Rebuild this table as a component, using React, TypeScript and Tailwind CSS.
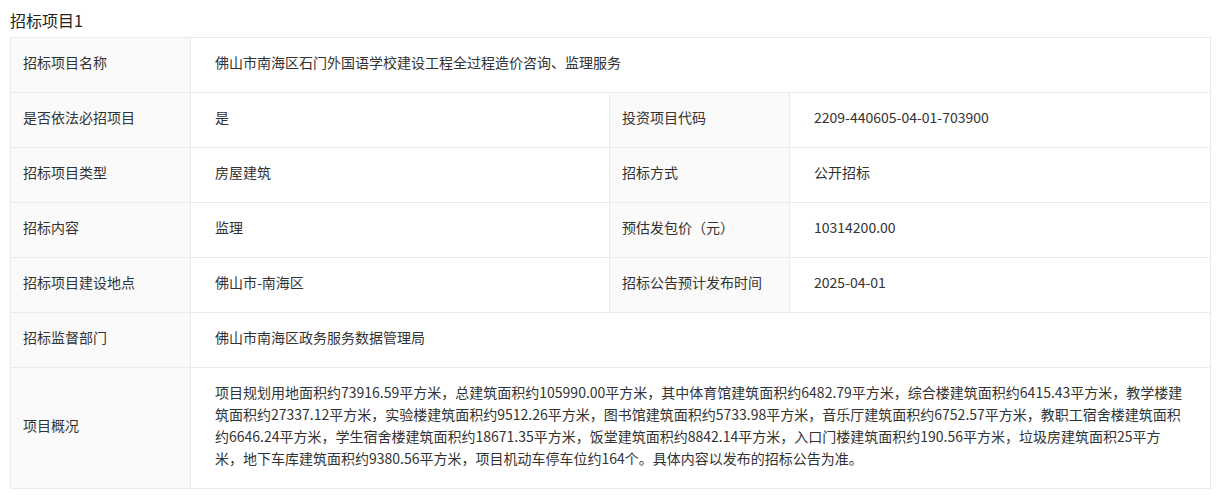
import React from 'react';

const font = { fontFamily: '"Noto Sans CJK SC", "Noto Sans", sans-serif' };

function Label({ children }: { children: React.ReactNode }) {
  return (
    <td className="border border-[#ebebeb] bg-[#fafafa] px-3 pt-[13px] pb-[19px] align-middle text-[14px] leading-[22px] text-[#333]">
      {children}
    </td>
  );
}

function Value({ children, colSpan }: { children: React.ReactNode; colSpan?: number }) {
  return (
    <td colSpan={colSpan} className="border border-[#ebebeb] bg-white pt-[13px] pb-[19px] pl-6 pr-2 align-middle text-[14px] leading-[22px] text-[#333]">
      {children}
    </td>
  );
}

const overview = [
  '项目规划用地面积约73916.59平方米，总建筑面积约105990.00平方米，其中体育馆建筑面积约6482.79平方米，综合楼建筑面积约6415.43平方米，教学楼建',
  '筑面积约27337.12平方米，实验楼建筑面积约9512.26平方米，图书馆建筑面积约5733.98平方米，音乐厅建筑面积约6752.57平方米，教职工宿舍楼建筑面积',
  '约6646.24平方米，学生宿舍楼建筑面积约18671.35平方米，饭堂建筑面积约8842.14平方米，入口门楼建筑面积约190.56平方米，垃圾房建筑面积25平方',
  '米，地下车库建筑面积约9380.56平方米，项目机动车停车位约164个。具体内容以发布的招标公告为准。',
];

export default function App() {
  return (
    <div className="min-h-[496px] bg-white px-[10px] pt-[9px]" style={font}>
      <h3 className="mb-[6px] text-[16px] font-normal leading-[22px] text-[#222]">招标项目1</h3>
      <table className="w-[1200px] table-fixed border-collapse">
        <colgroup>
          <col className="w-[180px]" />
          <col className="w-[419px]" />
          <col className="w-[180px]" />
          <col className="w-[421px]" />
        </colgroup>
        <tbody>
          <tr>
            <Label>招标项目名称</Label>
            <Value colSpan={3}>佛山市南海区石门外国语学校建设工程全过程造价咨询、监理服务</Value>
          </tr>
          <tr>
            <Label>是否依法必招项目</Label>
            <Value>是</Value>
            <Label>投资项目代码</Label>
            <Value>2209-440605-04-01-703900</Value>
          </tr>
          <tr>
            <Label>招标项目类型</Label>
            <Value>房屋建筑</Value>
            <Label>招标方式</Label>
            <Value>公开招标</Value>
          </tr>
          <tr>
            <Label>招标内容</Label>
            <Value>监理</Value>
            <Label>预估发包价（元）</Label>
            <Value>10314200.00</Value>
          </tr>
          <tr>
            <Label>招标项目建设地点</Label>
            <Value>佛山市-南海区</Value>
            <Label>招标公告预计发布时间</Label>
            <Value>2025-04-01</Value>
          </tr>
          <tr>
            <Label>招标监督部门</Label>
            <Value colSpan={3}>佛山市南海区政务服务数据管理局</Value>
          </tr>
          <tr>
            <Label>项目概况</Label>
            <Value colSpan={3}>
              {overview.map((line) => (
                <span key={line} className="block whitespace-nowrap">
                  {line}
                </span>
              ))}
            </Value>
          </tr>
        </tbody>
      </table>
    </div>
  );
}
